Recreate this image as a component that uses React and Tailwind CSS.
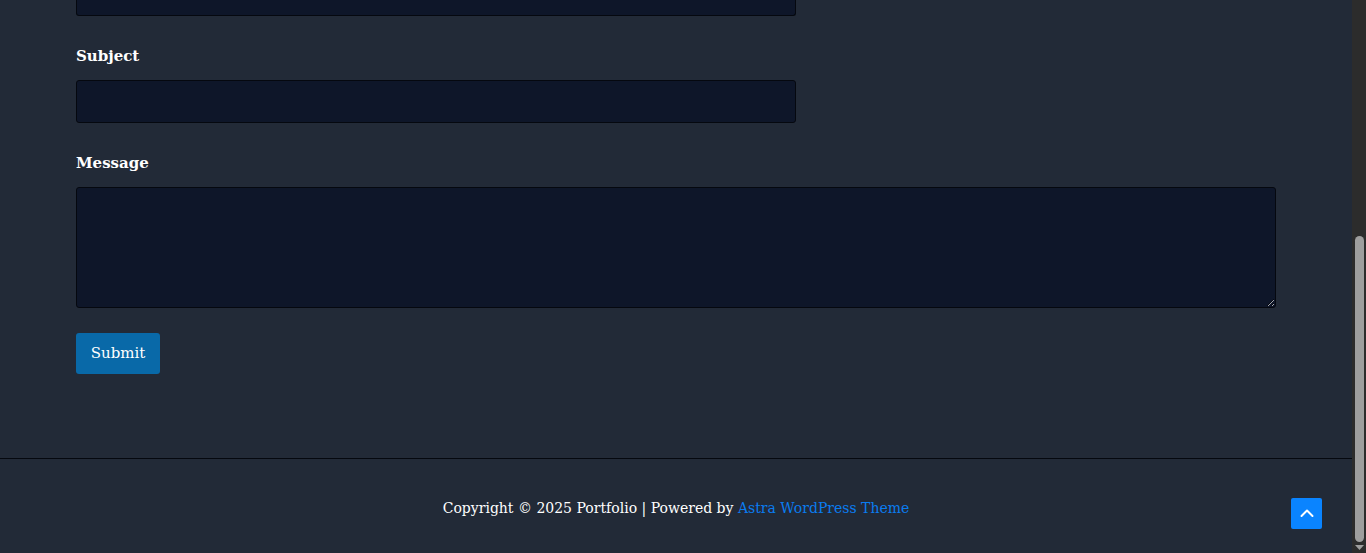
import React from 'react';

const serif = "font-['DejaVu_Serif',Georgia,serif]";

const Field = ({ label, children }) => (
  <div className="flex flex-col">
    <label className={`${serif} text-[15px] font-bold text-white leading-[20px] pt-[30px] pb-[14px]`}>{label}</label>
    {children}
  </div>
);

const ContactPage = () => {
  return (
    <div className="flex h-[553px] w-[1366px] overflow-hidden bg-[#222a37]">
      <div className="flex flex-1 flex-col">
        <main className="flex flex-col px-[76px] h-[458px]">
          <div className="h-[16px] w-[720px] rounded-b-[3px] border-x border-b border-[#05080f] bg-[#0e1629]" />
          <Field label="Subject">
            <input className="h-[43px] w-[720px] rounded-[3px] border border-[#05080f] bg-[#0e1629] outline-none" />
          </Field>
          <Field label="Message">
            <textarea className="h-[121px] w-[1200px] rounded-[3px] border border-[#05080f] bg-[#0e1629] outline-none resize-y" />
          </Field>
          <div className="pt-[25px]">
            <button className={`${serif} h-[41px] w-[84px] rounded-[3px] bg-[#0969a8] text-[15px] text-white`}>Submit</button>
          </div>
        </main>
        <footer className="flex flex-1 items-center border-t border-[#05080f] pl-[30px] pr-[30px]">
          <div className="flex-1" />
          <p className={`${serif} text-[14px] text-white pt-[5px]`}>
            Copyright © 2025 Portfolio | Powered by{' '}
            <a href="#" className="text-[#0a7cf0]">Astra WordPress Theme</a>
          </p>
          <div className="flex flex-1 justify-end pt-[14px]">
            <button className="flex h-[31px] w-[31px] items-center justify-center rounded-[2px] bg-[#0a84ff]">
              <svg width="16" height="16" viewBox="0 0 16 16" fill="none" stroke="white" strokeWidth="2" strokeLinecap="round" strokeLinejoin="round">
                <path d="M2.5 11 8 5.5l5.5 5.5" />
              </svg>
            </button>
          </div>
        </footer>
      </div>
      <div className="flex w-[15px] flex-col bg-[#2c2c2c]">
        <div className="h-[236px]" />
        <div className="mx-auto h-[306px] w-[9px] rounded-[5px] bg-[#9e9e9e]" />
        <div className="flex flex-1 items-center justify-center">
          <svg width="9" height="6" viewBox="0 0 9 6"><path d="M0 0h9L4.5 5z" fill="#9e9e9e" /></svg>
        </div>
      </div>
    </div>
  );
};

export default ContactPage;
